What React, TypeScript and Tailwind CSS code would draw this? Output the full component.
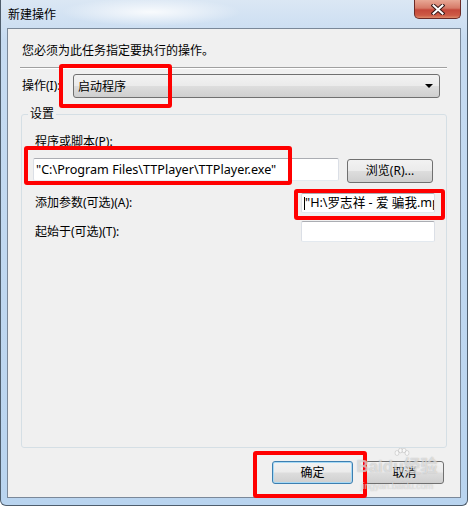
import React from 'react';

const btn =
  'flex items-center justify-center rounded-[3px] border bg-[linear-gradient(180deg,#f2f2f2_0%,#ebebeb_48%,#dddddd_52%,#cfcfcf_100%)] text-[12px]';

const box = 'bg-white border border-[#abadb3] border-t-[#abadb3] border-x-[#dbdfe6] border-b-[#e3e9ef] rounded-[2px]';

const RedBox = ({ className }: { className: string }) => (
  <div className={`absolute border-[4px] border-[#ff0000] rounded-[3px] pointer-events-none ${className}`} />
);

export default function App() {
  return (
    <div className="relative w-[468px] h-[506px] overflow-hidden flex flex-col font-['Noto_Sans','Noto_Sans_CJK_SC',sans-serif] text-[12px] text-black bg-[linear-gradient(180deg,#dbe7f4_0%,#c6dbf1_8%,#b9d4ef_100%)] border-x border-b border-[#4e5d6c] rounded-b-[6px]">
      {/* Title bar */}
      <div className="relative h-[28px] flex items-start shrink-0 bg-[radial-gradient(ellipse_90px_14px_at_150px_12px,rgba(255,255,255,0.85),rgba(255,255,255,0))]">
        <span className="pl-[7px] pt-[6px] leading-[16px] font-['Noto_Sans_CJK_SC',sans-serif]">新建操作</span>
        <div className="ml-auto mr-[6px] w-[47px] h-[19px] rounded-b-[5px] border border-t-0 border-[#6b2a26] bg-[linear-gradient(180deg,#e8a895_0%,#d67a68_45%,#c4483a_55%,#cd5a45_85%,#dc8a6a_100%)] flex items-center justify-center">
          <svg width="14" height="11" viewBox="0 0 14 11">
            <path d="M2.5 1.5 L11.5 9.5 M11.5 1.5 L2.5 9.5" stroke="#3a1a18" strokeWidth="4" strokeLinecap="square" />
            <path d="M2.5 1.5 L11.5 9.5 M11.5 1.5 L2.5 9.5" stroke="#ffffff" strokeWidth="2" strokeLinecap="square" />
          </svg>
        </div>
      </div>

      {/* Client area */}
      <div className="mx-[6px] h-[470px] shrink-0 border border-[#7a8899] bg-[#f0f0f0] flex flex-col">
        <p className="mt-[14px] ml-[14px] h-[16px] leading-[16px]">您必须为此任务指定要执行的操作。</p>
        <div className="mt-[8px] ml-[12px] mr-[13px] h-[2px] border-t border-t-[#a0a0a0] border-b border-b-white" />

        <div className="mt-[5px] flex items-center h-[24px]">
          <span className="ml-[14px] w-[51px] leading-[16px]">操作(I):</span>
          <div className="w-[367px] h-[24px] rounded-[3px] border border-[#707070] bg-[linear-gradient(180deg,#f2f2f2_0%,#ebebeb_48%,#dddddd_52%,#cfcfcf_100%)] flex items-center pl-[4px] pr-[6px]">
            <span className="flex-1 leading-[16px] font-['Noto_Sans_CJK_SC',sans-serif]">启动程序</span>
            <svg width="8" height="4" viewBox="0 0 8 4">
              <polygon points="0,0 8,0 4,4" fill="#000" />
            </svg>
          </div>
        </div>

        <fieldset className="mt-[8px] ml-[13px] w-[426px] h-[342px] border border-[#d5dfe5] rounded-[3px]">
          <legend className="ml-[6px] px-[2px] leading-[16px]">设置</legend>
          <div className="mt-[12px] pl-[13px] h-[16px] leading-[16px]">程序或脚本(P):</div>
          <div className="mt-[8px] flex items-start">
            <div className={`ml-[11px] w-[306px] h-[23px] ${box} flex items-center pl-[2px] whitespace-nowrap overflow-hidden`}>
              <span className="leading-[16px] text-[12.6px]">"C:\Program Files\TTPlayer\TTPlayer.exe"</span>
            </div>
            <div className={`ml-[8px] mt-[1px] w-[86px] h-[24px] border-[#707070] ${btn}`}>浏览(R)...</div>
          </div>

          <div className="mt-[10px] flex items-center h-[20px]">
            <span className="pl-[13px] flex-1 leading-[16px]">添加参数(可选)(A):</span>
            <div className={`mr-[11px] w-[134px] h-[20px] ${box} flex items-center pl-[2px] whitespace-nowrap overflow-hidden`}>
              <span className="w-px h-[13px] bg-black shrink-0" />
              <span className="leading-[16px] text-[12.6px]">"H:\罗志祥 - 爱 骗我.mp3"</span>
            </div>
          </div>

          <div className="mt-[8px] flex items-center h-[21px]">
            <span className="pl-[13px] flex-1 leading-[16px]">起始于(可选)(T):</span>
            <div className={`mr-[11px] w-[134px] h-[21px] ${box}`} />
          </div>
        </fieldset>

        <div className="mt-[13px] pr-[16px] flex justify-end gap-[12px]">
          <div className={`w-[81px] h-[23px] border-[#3c7fb1] shadow-[inset_0_0_0_1px_#a7d9f5] ${btn}`}>确定</div>
          <div className={`w-[79px] h-[23px] border-[#707070] ${btn}`}>取消</div>
        </div>
      </div>

      {/* Annotations drawn over the screenshot */}
      <RedBox className="left-[58px] top-[64px] w-[113px] h-[44px]" />
      <RedBox className="left-[23px] top-[146px] w-[268px] h-[39px]" />
      <RedBox className="left-[293px] top-[189px] w-[151px] h-[31px]" />
      <RedBox className="left-[252px] top-[451px] w-[114px] h-[47px]" />

      {/* Watermark */}
      <div className="absolute left-[352px] top-[448px] w-[88px] flex flex-col items-center pointer-events-none select-none">
        <svg width="16" height="12" viewBox="0 0 16 12" className="ml-[10px]">
          <g fill="rgba(255,255,255,0.55)" stroke="rgba(140,140,140,0.35)" strokeWidth="0.8">
            <ellipse cx="3" cy="5" rx="2" ry="2.5" />
            <ellipse cx="6.5" cy="2.5" rx="2" ry="2.3" />
            <ellipse cx="10" cy="2.5" rx="2" ry="2.3" />
            <ellipse cx="13" cy="5" rx="2" ry="2.5" />
          </g>
        </svg>
        <span className="-mt-[2px] text-[17px] leading-[18px] font-bold text-white/55 [text-shadow:0_0_1px_rgba(110,110,110,0.55)] font-['Liberation_Sans','Noto_Sans_CJK_SC',sans-serif] whitespace-nowrap">Baidu经验</span>
        <span className="mt-[5px] text-[9px] leading-[10px] text-white/60 [text-shadow:0_0_1px_rgba(110,110,110,0.5)] font-['Liberation_Sans',sans-serif]">jingyan.baidu.com</span>
      </div>
    </div>
  );
}
